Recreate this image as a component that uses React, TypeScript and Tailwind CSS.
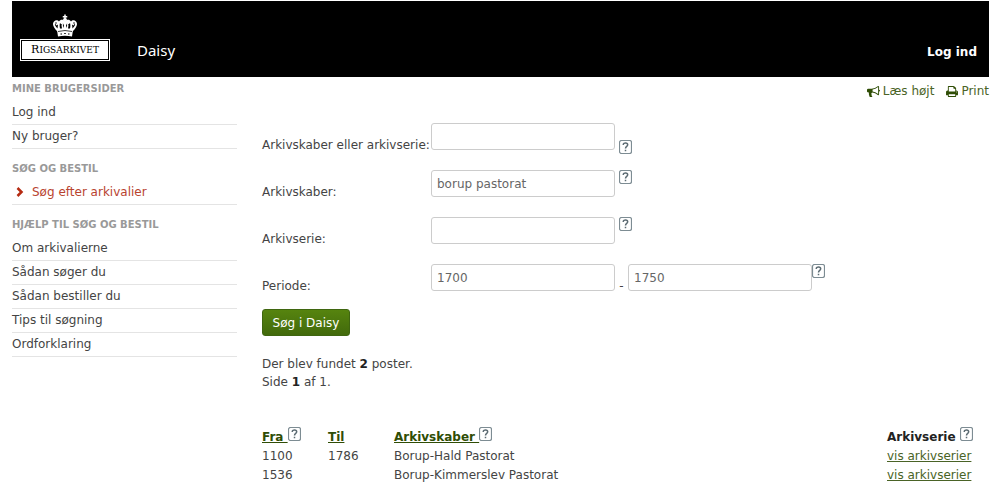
import React from "react";

function Crown() {
  return (
    <svg viewBox="0 0 52 46" className="h-[23px] w-[26px]" aria-hidden="true">
      <path d="M11 35C4 28-1 20 4 15c4-4 8-2 10 0 3-5 9-4 12 0 3-4 9-5 12 0 2-2 6-4 10 0 5 5 0 13-7 20z" fill="#fff" />
      <path d="M26 1v12M21.500 5.500h9" stroke="#fff" strokeWidth="3" />
      <circle cx="26" cy="12" r="4" fill="#fff" />
      <g fill="#000">
        <path d="M11 29C7 25 5 21 6 19l3 4 3-2zM41 29c4-4 6-8 5-10l-3 4-3-2z" />
        <path d="M16 29c-1-4-1-8 0-11l3 3 2-2-2 4 1 6zM36 29c1-4 1-8 0-11l-3 3-2-2 2 4-1 6z" />
        <path d="M22.500 28c-1-3-1-6 0-9l1.500 4zM29.500 28c1-3 1-6 0-9l-1.500 4z" />
        <circle cx="8" cy="18" r="1.500" />
        <circle cx="44" cy="18" r="1.500" />
      </g>
      <path d="M10 32q16-5 32 0l-2 13q-14-3-28 0z" fill="#fff" />
      <path d="M12 35q14-4 28 0" fill="none" stroke="#000" strokeWidth="1.500" />
      <path d="M17 40h3M24.500 39h3M32 40h3" stroke="#000" strokeWidth="2" />
    </svg>
  );
}

function Bullhorn() {
  return (
    <svg viewBox="0 0 1792 1792" className="h-[13px] w-[13px] text-[#2f4d05]" fill="currentColor" aria-hidden="true">
      <path d="M1664 640q53 0 90.500 37.500t37.500 90.500-37.500 90.500-90.500 37.500v384q0 52-38 90t-90 38q-417-347-812-380-58 19-91 66t-31 100.500 40 92.500q-20 33-23 65.500t6 58 33.500 55 48 50 61.500 50.500q-29 58-111.500 83t-168.500 11.500-132-55.500q-7-23-29.500-87.500t-32-94.500-23-89-15-101 3.500-98.500 22-110.500h-122q-66 0-113-47t-47-113v-192q0-66 47-113t113-47h480q435 0 896-384 52 0 90 38t38 90v384zm-128 604v-954q-394 302-768 343v270q377 42 768 341z" />
    </svg>
  );
}

function Printer() {
  return (
    <svg viewBox="64 128 1664 1536" className="h-[11px] w-3 text-[#2f4d05]" fill="currentColor" aria-hidden="true">
      <path d="M448 1536h896v-256h-896v256zm0-640h896v-384h-160q-40 0-68-28t-28-68v-160h-640v640zm1152 64q0-26-19-45t-45-19-45 19-19 45 19 45 45 19 45-19 19-45zm128 0v416q0 13-9.500 22.500t-22.500 9.500h-224v160q0 40-28 68t-68 28h-960q-40 0-68-28t-28-68v-160h-224q-13 0-22.500-9.500t-9.500-22.500v-416q0-79 56.500-135.500t135.500-56.500h64v-544q0-40 28-68t68-28h672q40 0 88 20t76 48l152 152q28 28 48 76t20 88v256h64q79 0 135.500 56.500t56.500 135.500z" />
    </svg>
  );
}

function Help({ className = "" }: { className?: string }) {
  return (
    <button type="button" aria-label="Hjælp" className={`inline-block h-[14px] w-[13px] shrink-0 ${className}`}>
      <svg viewBox="0 0 13 14" className="block h-full w-full">
        <rect x="0.5" y="0.5" width="12" height="13" rx="2" fill="#fff" stroke="#7d8c93" strokeWidth="1.200" />
        <path d="M4.300 5V4.500C4.300 2.400 8.700 2.400 8.700 4.800C8.700 6.400 6.500 6.400 6.500 8.600M6.500 9.700V11.200" fill="none" stroke="#5d6c73" strokeWidth="1.500" />
      </svg>
    </button>
  );
}

function Group({ title, items, active = false }: { title: string; items: string[]; active?: boolean }) {
  return (
    <section>
      <h2 className="flex h-8 items-center pt-2 text-[10px] font-bold uppercase text-[#999]">{title}</h2>
      <ul>
        {items.map((item) => (
          <li key={item} className="h-6 border-b border-[#e4e4e4]">
            <a href="#" className={active ? "flex items-center gap-2 pl-1 leading-[22px] text-[#b8432f]" : "block leading-[22px]"}>
              {active && (
                <svg viewBox="0 0 8 10" className="h-2.5 w-2" aria-hidden="true">
                  <path d="M1.500 1l4 4-4 4" fill="none" stroke="#b52b12" strokeWidth="2.500" />
                </svg>
              )}
              {item}
            </a>
          </li>
        ))}
      </ul>
    </section>
  );
}

const field = "h-[27px] w-[184px] rounded-[3px] border border-[#ccc] bg-white px-[5px] text-[#666] outline-none";

function Row({ id, label, children }: { id: string; label: string; children: React.ReactNode }) {
  return (
    <div className="flex h-[31px]">
      <label htmlFor={id} className="w-[168px] shrink-0 self-end whitespace-nowrap">{label}</label>
      {children}
    </div>
  );
}

const results = [
  { from: "1100", to: "1786", name: "Borup-Hald Pastorat" },
  { from: "1536", to: "", name: "Borup-Kimmerslev Pastorat" },
];

export default function App() {
  return (
    <div className="bg-white pl-3 pr-[11px] pt-px font-['DejaVu_Sans',sans-serif] text-[12px] leading-[18px] text-[#444]">
      <header className="flex h-[76px] items-end justify-between bg-black text-white">
        <div className="flex items-end pb-4 pl-2">
          <a href="#" className="flex flex-col items-center gap-0.5">
            <Crown />
            <span className="border border-white p-px">
              <span className="flex h-[18px] w-[86px] items-center justify-center bg-white font-['DejaVu_Serif',serif] text-[9px] text-black">
                <span><span className="text-[11px]">R</span>IGSARKIVET</span>
              </span>
            </span>
          </a>
          <a href="#" className="pb-0.5 pl-[27px] font-['Noto_Sans',sans-serif] text-[15px] leading-[18px]">Daisy</a>
        </div>
        <a href="#" className="pb-4 pr-3 font-bold">Log ind</a>
      </header>
      <div className="flex gap-[25px]">
        <nav className="-mt-2 w-[225px] shrink-0">
          <Group title="Mine brugersider" items={["Log ind", "Ny bruger?"]} />
          <Group title="Søg og bestil" items={["Søg efter arkivalier"]} active />
          <Group
            title="Hjælp til søg og bestil"
            items={["Om arkivalierne", "Sådan søger du", "Sådan bestiller du", "Tips til søgning", "Ordforklaring"]}
          />
        </nav>
        <main className="min-w-0 flex-1">
          <div className="flex justify-end gap-3 pt-[5px] text-[#4a6326]">
            <a href="#" className="flex items-center gap-[3px]"><Bullhorn />Læs højt</a>
            <a href="#" className="flex items-center gap-[3px]"><Printer />Print</a>
          </div>
          <form className="flex flex-col gap-4 pt-[23px]" onSubmit={(e) => e.preventDefault()}>
            <Row id="all" label="Arkivskaber eller arkivserie:">
              <input id="all" className={`ml-px ${field}`} />
              <Help className="ml-1 self-end" />
            </Row>
            <Row id="creator" label="Arkivskaber:">
              <input id="creator" className={`ml-px ${field}`} defaultValue="borup pastorat" />
              <Help className="ml-1" />
            </Row>
            <Row id="series" label="Arkivserie:">
              <input id="series" className={`ml-px ${field}`} />
              <Help className="ml-1" />
            </Row>
            <Row id="from" label="Periode:">
              <input id="from" className={`ml-px ${field}`} defaultValue="1700" />
              <span className="w-[13px] self-end text-center">-</span>
              <input aria-label="Periode til" className={field} defaultValue="1750" />
              <Help />
            </Row>
            <button type="submit" className="-mt-0.5 h-[27px] w-[88px] rounded-[3px] border border-[#3f6610] bg-linear-to-b from-[#56840f] to-[#426a0c] text-white">
              Søg i Daisy
            </button>
          </form>
          <p className="pt-[19px]">
            Der blev fundet <b className="text-[#222]">2</b> poster.
            <br />
            Side <b className="text-[#222]">1</b> af 1.
          </p>
          <table className="mt-9 w-full table-fixed text-left">
            <thead className="text-[#222]">
              <tr className="h-[19px]">
                <th className="w-[66px] p-0"><a href="#" className="text-[#2f4d05] underline">Fra </a><Help /></th>
                <th className="w-[66px] p-0"><a href="#" className="text-[#2f4d05] underline">Til</a></th>
                <th className="p-0"><a href="#" className="text-[#2f4d05] underline">Arkivskaber </a><Help /></th>
                <th className="w-[102px] p-0">Arkivserie <Help /></th>
              </tr>
            </thead>
            <tbody>
              {results.map((r) => (
                <tr key={r.from} className="h-[19px]">
                  <td className="p-0">{r.from}</td>
                  <td className="p-0">{r.to}</td>
                  <td className="p-0">{r.name}</td>
                  <td className="p-0"><a href="#" className="text-[#4a6326] underline">vis arkivserier</a></td>
                </tr>
              ))}
            </tbody>
          </table>
        </main>
      </div>
    </div>
  );
}
